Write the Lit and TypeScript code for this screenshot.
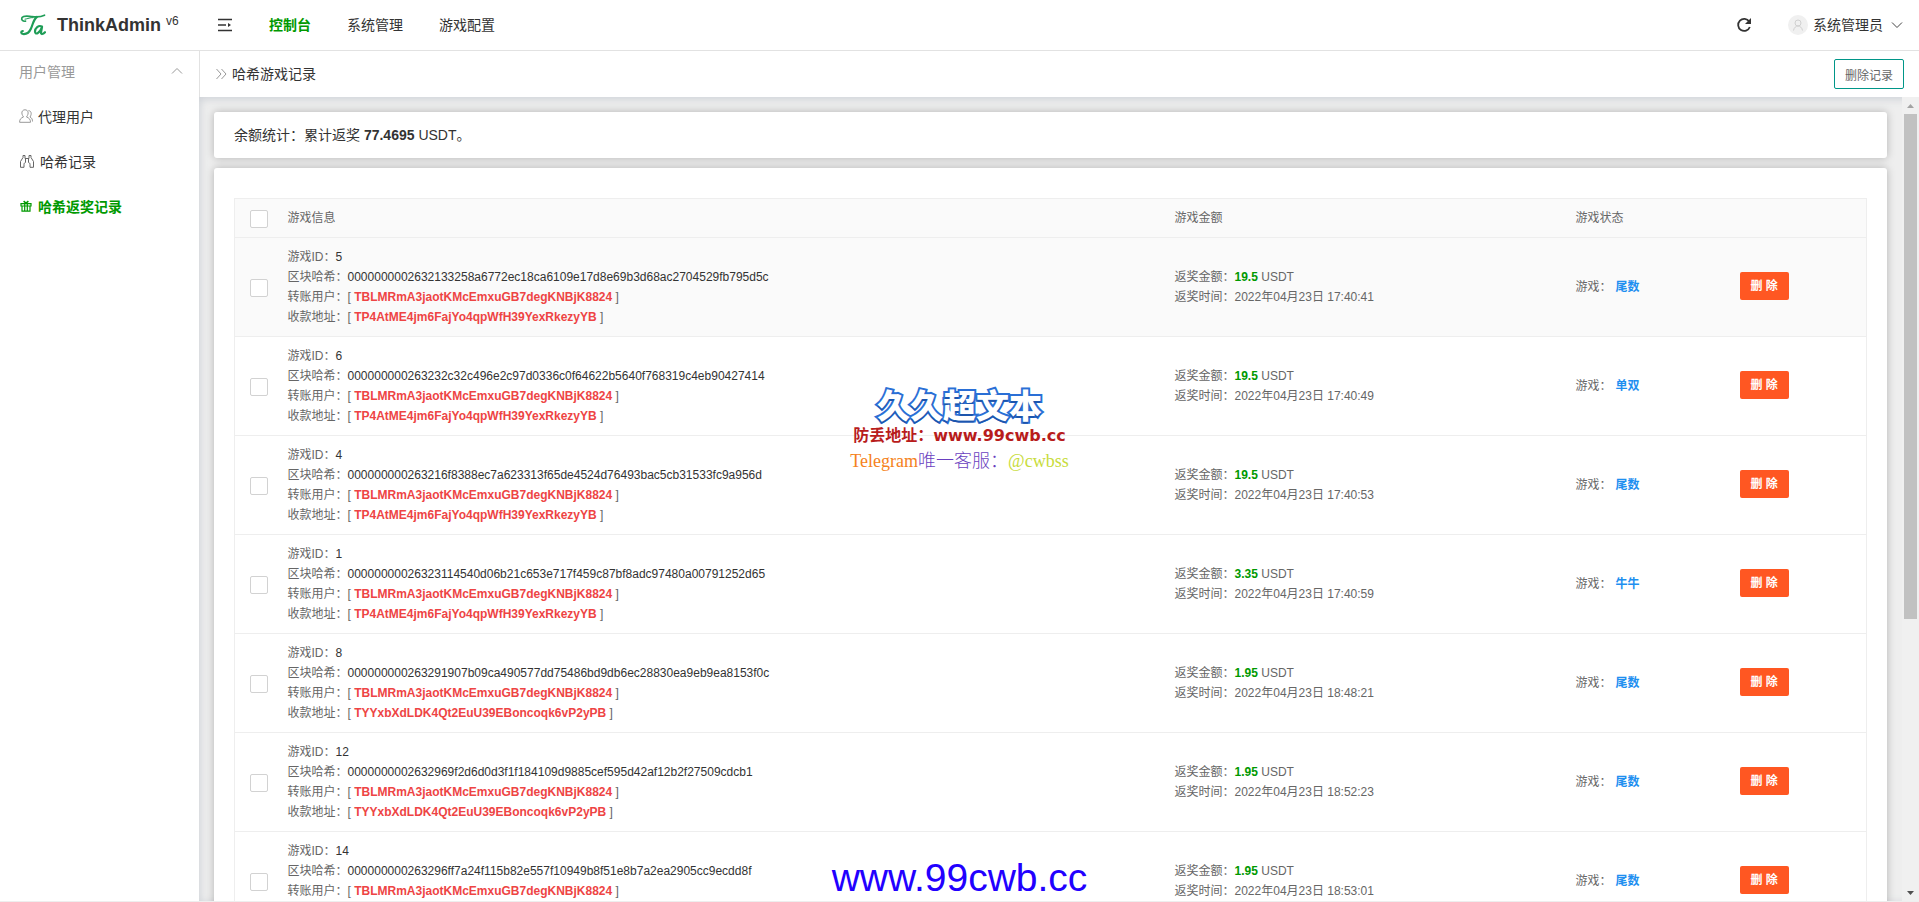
import { LitElement, html, css, svg } from "lit";
import { customElement, property } from "lit/decorators.js";

interface RecordRow {
  id: number;
  hash: string;
  from: string;
  to: string;
  amount: string;
  time: string;
  game: string;
}

const PAYER = "TBLMRmA3jaotKMcEmxuGB7degKNBjK8824";
const WALLET_A = "TP4AtME4jm6FajYo4qpWfH39YexRkezyYB";
const WALLET_B = "TYYxbXdLDK4Qt2EuU39EBoncoqk6vP2yPB";

const ROWS: RecordRow[] = [
  { id: 5, hash: "0000000002632133258a6772ec18ca6109e17d8e69b3d68ac2704529fb795d5c", from: PAYER, to: WALLET_A, amount: "19.5", time: "2022年04月23日 17:40:41", game: "尾数" },
  { id: 6, hash: "000000000263232c32c496e2c97d0336c0f64622b5640f768319c4eb90427414", from: PAYER, to: WALLET_A, amount: "19.5", time: "2022年04月23日 17:40:49", game: "单双" },
  { id: 4, hash: "000000000263216f8388ec7a623313f65de4524d76493bac5cb31533fc9a956d", from: PAYER, to: WALLET_A, amount: "19.5", time: "2022年04月23日 17:40:53", game: "尾数" },
  { id: 1, hash: "00000000026323114540d06b21c653e717f459c87bf8adc97480a00791252d65", from: PAYER, to: WALLET_A, amount: "3.35", time: "2022年04月23日 17:40:59", game: "牛牛" },
  { id: 8, hash: "000000000263291907b09ca490577dd75486bd9db6ec28830ea9eb9ea8153f0c", from: PAYER, to: WALLET_B, amount: "1.95", time: "2022年04月23日 18:48:21", game: "尾数" },
  { id: 12, hash: "0000000002632969f2d6d0d3f1f184109d9885cef595d42af12b2f27509cdcb1", from: PAYER, to: WALLET_B, amount: "1.95", time: "2022年04月23日 18:52:23", game: "尾数" },
  { id: 14, hash: "000000000263296ff7a24f115b82e557f10949b8f51e8b7a2ea2905cc9ecdd8f", from: PAYER, to: WALLET_B, amount: "1.95", time: "2022年04月23日 18:53:01", game: "尾数" },
];

const reset = css`
  * { box-sizing: border-box; }
  a { color: inherit; text-decoration: none; }
  button { font: inherit; margin: 0; cursor: pointer; }
  svg { display: block; flex: none; }
`;

const logo = svg`
  <svg width="26" height="22" viewBox="0 0 26 22" fill="none" stroke="#1f9d57" stroke-linecap="round" stroke-linejoin="round">
    <path d="M5.500 7.200C2.500 7.500 1 5.500 2 3.600C3.800 1 8 2.200 12 2.600C17 3.200 21 3 24.500 1.200" stroke-width="1.700"/>
    <path d="M5 5.200C8 4.800 10 3.400 13 3.600" stroke-width="1"/>
    <path d="M16.800 3C13.500 5.500 13 10 11 14.500C9.300 18.500 6 20.300 3 20C.8 19.600.6 17.400 2.800 17" stroke-width="2.200"/>
    <path d="M22 12.500C18.500 10.800 15 14 15 17.600C15 21 19.500 20 22 13L21 18.400C20.800 20.800 23 20.400 25 18.200" stroke-width="2.200"/>
  </svg>`;

@customElement("app-header")
class AppHeader extends LitElement {
  static styles = [reset, css`
    :host { display: flex; align-items: center; height: 51px; flex: none; background: #fff; border-bottom: 1px solid #e2e2e2; color: #333; }
    .brand { display: flex; align-items: center; width: 200px; height: 100%; padding-left: 20px; gap: 11px; }
    .name { font-size: 18px; font-weight: 700; line-height: 50px; }
    .ver { font-size: 12px; font-weight: 400; line-height: 12px; vertical-align: 6px; margin-left: 5px; -webkit-text-stroke: 0; }
    .menu { border: 0; background: none; padding: 0; display: flex; width: 50px; height: 50px; align-items: center; justify-content: center; color: #333; }
    .nav { display: flex; flex: 1; padding-left: 1px; font-size: 14px; line-height: 50px; }
    .nav a { padding: 0 18px; }
    .nav .on { color: #090; font-weight: 700; }
    .tools { display: flex; align-items: center; gap: 36px; padding-right: 16px; }
    .icon { border: 0; background: none; padding: 0; display: flex; }
    .user { display: flex; align-items: center; gap: 5px; font-size: 14px; line-height: 50px; color: #333; border: 0; background: none; padding: 0; }
    .avatar { display: flex; align-items: center; justify-content: center; width: 20px; height: 20px; border-radius: 50%; background: #f0f0f0; }
    .arrow { margin-left: 3px; }
  `];
  render() {
    return html`
      <a class="brand" href="#">${logo}<span class="name">ThinkAdmin<span class="ver">v6</span></span></a>
      <button class="menu" aria-label="折叠菜单">
        <svg width="16" height="14" viewBox="0 0 16 14" fill="none" stroke="#333" stroke-width="1.500"><path d="M1 1.500H15M1 7H9M1 12.500H15"/><path d="M11 5L14 7L11 9Z" fill="#333" stroke="none"/></svg>
      </button>
      <nav class="nav"><a class="on" href="#">控制台</a><a href="#">系统管理</a><a href="#">游戏配置</a></nav>
      <div class="tools">
        <button class="icon" aria-label="刷新">
          <svg width="16" height="16" viewBox="0 0 16 16" fill="none" stroke="#333" stroke-width="1.800"><path d="M13.200 4.600A6 6 0 1 0 13.800 10"/><path d="M15 1V7H9Z" fill="#333" stroke="none"/></svg>
        </button>
        <button class="user">
          <span class="avatar"><svg width="12" height="12" viewBox="0 0 12 12" fill="none" stroke="#d0d0d0"><circle cx="6" cy="4" r="3"/><path d="M1.500 11.500C2 8.500 4 7 6 7S10 8.500 10.500 11.500"/></svg></span>
          系统管理员
          <svg class="arrow" width="12" height="8" viewBox="0 0 12 8" fill="none" stroke="#444"><path d="M1 1.500L6 6.500L11 1.500"/></svg>
        </button>
      </div>`;
  }
}

@customElement("app-sidebar")
class AppSidebar extends LitElement {
  static styles = [reset, css`
    :host { display: block; width: 200px; flex: none; background: #fff; border-right: 1px solid #e2e2e2; font-size: 14px; color: #333; }
    .group { display: flex; align-items: center; justify-content: space-between; width: 100%; height: 40px; padding: 0 16px 0 19px; color: #999; border: 0; background: none; text-align: left; }
    .nav { padding-top: 2px; }
    .item { display: flex; align-items: center; gap: 5px; height: 45px; padding-left: 19px; }
    .on { color: #090; font-weight: 700; }
  `];
  render() {
    return html`
      <button class="group">用户管理
        <svg width="12" height="8" viewBox="0 0 12 8" fill="none" stroke="#999"><path d="M1 6.500L6 1.500L11 6.500"/></svg>
      </button>
      <nav class="nav">
        <a class="item" href="#"><svg width="14" height="14" viewBox="0 0 14 14" fill="none" stroke="#999"><path d="M4.500 8C1.500 4 3 .8 6 .8S10.500 4 7.500 8C10 9 11.500 10 11.500 13.300H.6C.6 10 2 9 4.500 8Z"/><path d="M9.500 1.500C12.500 2 13 5 11 8C13 9 13.500 10.500 13.500 12.500"/></svg>代理用户</a>
        <a class="item" href="#"><svg width="16" height="14" viewBox="0 0 16 14" fill="none" stroke="#666"><path d="M1.500 13.300V7.500L4 3.500V1.500H6V4.500H10V1.500H12V3.500L14.500 7.500V13.300H11V10.500C11 9 10 8.500 9.500 8.500V4.500M1.500 13.300H5V10.500C5 9 6 8.500 6.500 8.500V4.500"/></svg>哈希记录</a>
        <a class="item on" href="#"><svg width="14" height="12" viewBox="0 0 14 12" fill="none" stroke="#090"><path d="M3 6V11.200H11V6M2 3.600H12V6H2ZM5.700 3.600V11M8.300 3.600V11" stroke-width="1.200"/><path d="M7 3.200L4.600 1.200M7 3.200L9.400 1.200" stroke-width="1.500"/></svg>哈希返奖记录</a>
      </nav>`;
  }
}

@customElement("record-table")
class RecordTable extends LitElement {
  @property({ attribute: false }) rows: RecordRow[] = [];
  static styles = [reset, css`
    :host { display: block; }
    .table { width: 100%; border-collapse: collapse; table-layout: fixed; font-size: 12px; line-height: 20px; color: #666; border: 1px solid #eee; }
    .table th { font-weight: 400; text-align: left; height: 39px; padding: 0 15px; background: #fafafa; border-bottom: 1px solid #eee; }
    .table td { padding: 9px 15px; border-bottom: 1px solid #eee; vertical-align: middle; }
    .first td { background: #fafafa; }
    .pick { width: 38px; }
    .amount { width: 401px; }
    .state { width: 164px; }
    .ops { width: 142px; }
    .table .check { padding: 0; }
    .box { display: block; appearance: none; width: 18px; height: 18px; margin: 2px 0 0 15px; border: 1px solid #d2d2d2; border-radius: 2px; background: #fff; }
    .dark { color: #333; }
    .red { color: #e44; }
    .green { color: #090; }
    .blue { color: #1e8ff0; margin-left: 4px; }
    .table .act { padding-top: 8px; padding-bottom: 10px; }
    .del { display: block; height: 28px; padding: 0 11px; border: 0; border-radius: 2px; background: #ff5722; color: #fff; line-height: 28px; font-weight: 700; }
  `];
  render() {
    return html`
      <table class="table">
        <colgroup><col class="pick"><col><col class="amount"><col class="state"><col class="ops"></colgroup>
        <thead><tr>
          <th class="check"><input class="box" type="checkbox" aria-label="全选"></th>
          <th>游戏信息</th><th>游戏金额</th><th>游戏状态</th><th></th>
        </tr></thead>
        <tbody>${this.rows.map((r, i) => html`
          <tr class=${i === 0 ? "first" : ""}>
            <td class="check"><input class="box" type="checkbox" aria-label=${`选择 ${r.id}`}></td>
            <td>
              <div>游戏ID：<span class="dark">${r.id}</span></div>
              <div>区块哈希：<span class="dark">${r.hash}</span></div>
              <div>转账用户：[ <b class="red">${r.from}</b> ]</div>
              <div>收款地址：[ <b class="red">${r.to}</b> ]</div>
            </td>
            <td>
              <div>返奖金额：<b class="green">${r.amount}</b> USDT</div>
              <div>返奖时间：${r.time}</div>
            </td>
            <td>游戏：<b class="blue">${r.game}</b></td>
            <td class="act"><button class="del">删 除</button></td>
          </tr>`)}
        </tbody>
      </table>`;
  }
}

@customElement("site-mark")
class SiteMark extends LitElement {
  static styles = css`
    :host { position: absolute; inset: 0; pointer-events: none; }
    .badge { position: absolute; left: 50%; top: 380px; width: 240px; margin-left: -120px; text-align: center; white-space: nowrap; }
    .title { font: 900 33px/48px "Noto Sans CJK SC", sans-serif; color: #fff; -webkit-text-stroke: 4px #2a6fd6; paint-order: stroke fill; text-shadow: 0 2px 0 #1c55ad; }
    .safe { font: 700 16px/16px "DejaVu Sans", "Noto Sans CJK SC", sans-serif; color: #b81c1c; }
    .tele { margin-top: 6px; font: 400 18px/22px "Liberation Serif", "Noto Sans CJK SC", serif; }
    .orange { color: #f58220; }
    .purple { color: #6a3fc0; font-weight: 300; }
    .lime { color: #c8dc3c; }
    .url { position: absolute; left: 50%; bottom: 2px; width: 280px; margin-left: -140px; text-align: center; font: 400 39px/44px "Liberation Sans", sans-serif; color: #20f; }
  `;
  render() {
    return html`
      <div class="badge">
        <div class="title">久久超文本</div>
        <div class="safe">防丢地址：www.99cwb.cc</div>
        <div class="tele"><span class="orange">Telegram</span><span class="purple">唯一客服：</span><span class="lime">@cwbss</span></div>
      </div>
      <div class="url">www.99cwb.cc</div>`;
  }
}

@customElement("app-root")
class AppRoot extends LitElement {
  static styles = [reset, css`
    :host { position: relative; display: flex; flex-direction: column; height: 100vh; overflow: hidden; background: #fff; font-family: "Liberation Sans", "Noto Sans CJK SC", sans-serif; font-size: 14px; color: #333; }
    .main { display: flex; flex: 1; min-height: 0; border-bottom: 1px solid #eee; }
    .page { display: flex; flex-direction: column; flex: 1; min-width: 0; }
    .bar { display: flex; align-items: center; height: 46px; flex: none; padding: 0 15px; gap: 5px; background: #fff; }
    .bar h1 { flex: 1; margin: 0; padding-bottom: 3px; font-size: 14px; font-weight: 400; }
    .clear { height: 30px; padding: 0 10px; border: 1px solid #009688; border-radius: 2px; background: #fff; font-size: 12px; color: #666; }
    .body { display: flex; flex: 1; min-height: 0; margin-left: -1px; background: #eee; box-shadow: inset 1px 2px 8px #ccd0d6; }
    .content { display: flex; flex-direction: column; gap: 10px; flex: 1; min-width: 0; padding: 15px 15px 0; overflow: hidden; }
    .card { flex: none; background: #fff; border-radius: 3px; box-shadow: 0 0 8px rgba(0, 0, 0, 0.25); padding: 0 20px; }
    .total { line-height: 46px; }
    .list { padding-top: 30px; }
    .scroll { display: flex; flex-direction: column; align-items: center; width: 17px; flex: none; background: #f0f0f0; }
    .thumb { width: 13px; flex: 505; background: #c1c1c1; }
    .rest { flex: 265; }
    .tip { width: 17px; height: 17px; }
  `];
  render() {
    return html`
      <app-header></app-header>
      <div class="main">
        <app-sidebar></app-sidebar>
        <main class="page">
          <div class="bar">
            <svg width="12" height="12" viewBox="0 0 12 12" fill="none" stroke="#999"><path d="M1.500 1L6 6L1.500 11M6.500 1L11 6L6.500 11"/></svg>
            <h1>哈希游戏记录</h1>
            <button class="clear">删除记录</button>
          </div>
          <div class="body">
            <div class="content">
              <section class="card total">余额统计：累计返奖 <b>77.4695</b> USDT。</section>
              <section class="card list"><record-table .rows=${ROWS}></record-table></section>
            </div>
            <div class="scroll" aria-hidden="true">
              <svg class="tip" viewBox="0 0 17 17"><path d="M5 11L8.500 7L12 11Z" fill="#a3a3a3"/></svg>
              <div class="thumb"></div>
              <div class="rest"></div>
              <svg class="tip" viewBox="0 0 17 17"><path d="M5 7L8.500 11L12 7Z" fill="#505050"/></svg>
            </div>
          </div>
        </main>
      </div>
      <site-mark></site-mark>`;
  }
}
